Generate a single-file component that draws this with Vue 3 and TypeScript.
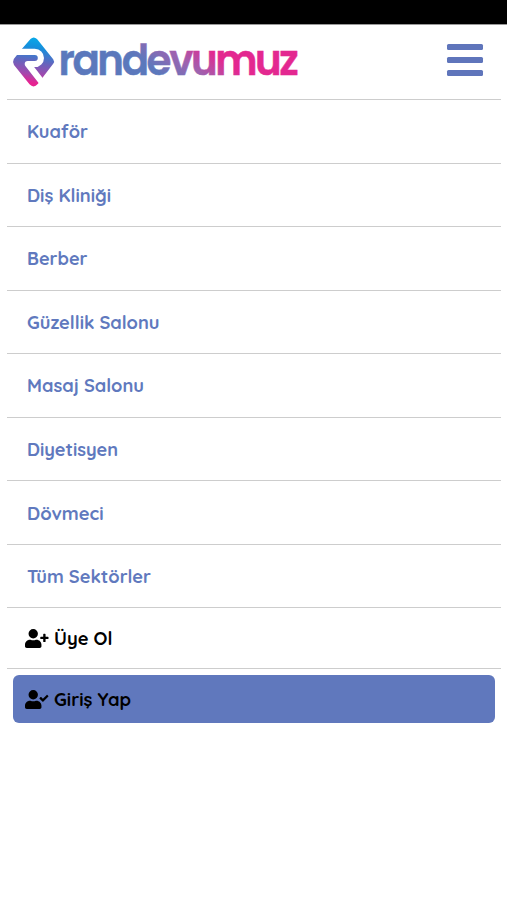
<script setup lang="ts">
interface Sector {
  label: string
  width: number
}

const sectors: Sector[] = [
  { label: 'Kuaför', width: 61 },
  { label: 'Diş Kliniği', width: 84 },
  { label: 'Berber', width: 60.5 },
  { label: 'Güzellik Salonu', width: 132.5 },
  { label: 'Masaj Salonu', width: 117 },
  { label: 'Diyetisyen', width: 91 },
  { label: 'Dövmeci', width: 76.5 },
  { label: 'Tüm Sektörler', width: 124 },
]
</script>

<template>
  <div class="screen">
    <div class="status-bar"></div>
    <header class="header">
      <svg class="logo" width="300" height="74" viewBox="0 25 300 74" role="img" aria-label="randevumuz">
        <defs>
          <linearGradient id="mark" gradientUnits="userSpaceOnUse" x1="37" y1="38" x2="30" y2="86">
            <stop offset="0" stop-color="#08a9e8" />
            <stop offset=".2" stop-color="#168fdc" />
            <stop offset=".5" stop-color="#6664bd" />
            <stop offset=".75" stop-color="#a348ad" />
            <stop offset=".93" stop-color="#e72391" />
          </linearGradient>
          <linearGradient id="word" gradientUnits="userSpaceOnUse" x1="110" y1="77" x2="140" y2="36">
            <stop offset="0" stop-color="#5b78bc" />
            <stop offset=".5" stop-color="#9c64b0" />
            <stop offset="1" stop-color="#e32890" />
          </linearGradient>
        </defs>
        <path
          d="M30.5 39Q33.7 36 37 39L53.2 59.2Q54.9 61.5 53.2 63.8L43.8 76L38 83.8Q33.7 88.7 29.5 84.3L14 65Q12.2 62 13.8 59L20.5 50.5Z"
          fill="url(#mark)"
        />
        <path d="M14 51.8H34.8A6.1 6.1 0 0 1 34.8 64H27.8L43 83.5" fill="none" stroke="#fff" stroke-width="6.2" stroke-linejoin="round" />
        <text class="wordmark" transform="translate(58.5 0) scale(.95 1)" x="0" y="75.5" textLength="253" lengthAdjust="spacing" fill="url(#word)" stroke="url(#word)" stroke-width=".5">randevumuz</text>
      </svg>
      <button class="menu-toggle" type="button" aria-label="Menü">
        <span></span><span></span><span></span>
      </button>
    </header>

    <nav class="menu">
      <a v-for="s in sectors" :key="s.label" class="row">
        <svg class="label" :width="s.width" height="28">
          <text x="0" y="20.5" :textLength="s.width" lengthAdjust="spacingAndGlyphs">{{ s.label }}</text>
        </svg>
      </a>
      <a class="row account">
        <svg class="icon" viewBox="0 0 640 512">
          <path d="M224 256a128 128 0 1 0 0-256 128 128 0 1 0 0 256zm89.6 32h-16.7a174 174 0 0 1-145.8 0h-16.7C60.2 288 0 348.2 0 422.4V464c0 26.5 21.5 48 48 48h352c26.5 0 48-21.5 48-48v-41.6c0-74.2-60.2-134.4-134.4-134.4zM624 208h-64v-64c0-8.8-7.2-16-16-16h-32c-8.8 0-16 7.2-16 16v64h-64c-8.8 0-16 7.2-16 16v32c0 8.8 7.2 16 16 16h64v64c0 8.8 7.2 16 16 16h32c8.8 0 16-7.2 16-16v-64h64c8.8 0 16-7.2 16-16v-32c0-8.8-7.2-16-16-16z" />
        </svg>
        <svg class="label" width="59" height="28">
          <text x="0" y="20.5" textLength="58.5" lengthAdjust="spacingAndGlyphs">Üye Ol</text>
        </svg>
      </a>
      <div class="login-wrap">
        <a class="login">
          <svg class="icon" viewBox="0 0 640 512">
            <path d="M224 256a128 128 0 1 0 0-256 128 128 0 1 0 0 256zm89.6 32h-16.7a174 174 0 0 1-145.8 0h-16.7C60.2 288 0 348.2 0 422.4V464c0 26.5 21.5 48 48 48h352c26.5 0 48-21.5 48-48v-41.6c0-74.2-60.2-134.4-134.4-134.4zM636.6 159.6l-27.8-28.2c-4.6-4.7-12.1-4.7-16.8-.1l-104.8 104-45.5-45.8c-4.6-4.7-12.1-4.7-16.8-.1l-28.1 27.9c-4.7 4.6-4.7 12.1-.1 16.8l81.7 82.3c4.6 4.7 12.1 4.7 16.8.1l141.3-140.2c4.6-4.7 4.7-12.2.1-16.7z" />
          </svg>
          <svg class="label" width="78" height="28">
            <text x="0" y="20.5" textLength="77" lengthAdjust="spacingAndGlyphs">Giriş Yap</text>
          </svg>
        </a>
      </div>
    </nav>
  </div>
</template>

<style>
body {
  margin: 0;
  background: #fff;
}
</style>

<style scoped>
.screen {
  min-height: 900px;
  background: #fff;
  font-family: Quicksand, Lato, "Noto Sans", sans-serif;
}
.status-bar {
  height: 24px;
  background: #000;
  border-bottom: 1px solid #999;
}
.header {
  display: flex;
  justify-content: space-between;
  height: 74px;
  padding-right: 24px;
}
.logo {
  display: block;
  overflow: visible;
}
.wordmark {
  font: 600 42.5px Poppins, Quicksand, sans-serif;
}
.menu-toggle {
  display: flex;
  flex-direction: column;
  gap: 7px;
  width: 36px;
  margin: 19px 0 0;
  padding: 0;
  border: 0;
  background: none;
}
.menu-toggle span {
  height: 6px;
  width: 36px;
  border-radius: 1.5px;
  background: #5f75bb;
}
.menu {
  margin: 0 6px 0 7px;
}
.row {
  display: flex;
  align-items: center;
  box-sizing: border-box;
  height: 63.55px;
  padding-left: 19.5px;
  border-top: 1px solid #cdcdcd;
  color: #6079be;
}
.label {
  display: block;
  overflow: visible;
  fill: currentColor;
  font-size: 18.5px;
  font-weight: 700;
}
.icon {
  width: 23.5px;
  height: 19px;
  margin-right: 5.5px;
  fill: currentColor;
}
.account {
  height: 61px;
  padding-left: 18px;
  color: #000;
}
.login-wrap {
  padding: 6px 6px 0;
  border-top: 1px solid #cdcdcd;
}
.login {
  display: flex;
  align-items: center;
  height: 48px;
  padding-left: 12px;
  border-radius: 6px;
  background: #6078bd;
  color: #000;
}
</style>
